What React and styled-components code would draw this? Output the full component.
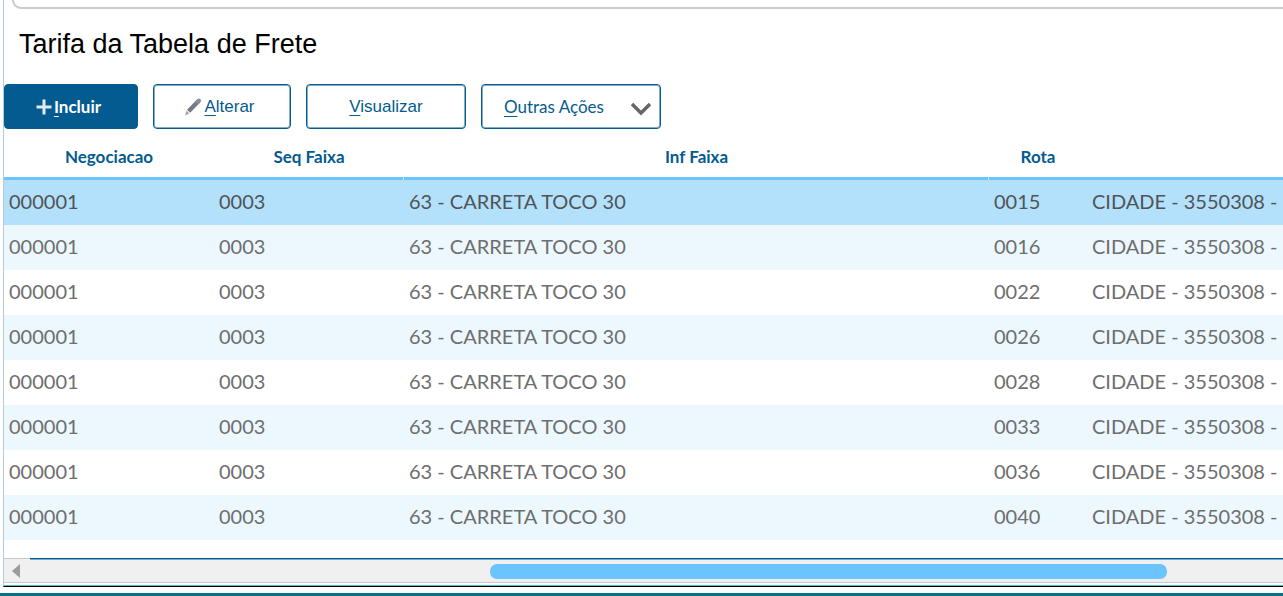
import { Fragment } from 'react';
import styled, { createGlobalStyle } from 'styled-components';

const COLUMNS = [
  { label: 'Negociacao', width: 210 },
  { label: 'Seq Faixa', width: 190, divider: true },
  { label: 'Inf Faixa', width: 585, divider: true },
  { label: 'Rota', width: 98 },
  { label: '', width: 585 },
];

const ROTAS = ['0015', '0016', '0022', '0026', '0028', '0033', '0036', '0040'];

const rows = ROTAS.map((rota) => [
  '000001',
  '0003',
  '63 - CARRETA TOCO 30',
  rota,
  'CIDADE - 3550308 -',
]);

const App = () => {
  return (
    <Fragment>
      <GlobalStyle />
      <Page>
        <Panel>
          <PreviousCard />
          <Title>Tarifa da Tabela de Frete</Title>
          <Toolbar>
            <IconButton $primary $width={134}>
              <PlusIcon />
              <span>
                <u>I</u>ncluir
              </span>
            </IconButton>
            <IconButton $arial $width={138}>
              <PencilIcon />
              <span>
                <u>A</u>lterar
              </span>
            </IconButton>
            <Button $arial $width={160}>
              <span>
                <u>V</u>isualizar
              </span>
            </Button>
            <MenuButton $width={180}>
              <span>
                <u>O</u>utras Ações
              </span>
              <ChevronIcon />
            </MenuButton>
          </Toolbar>
          <TableArea>
            <Table>
              <colgroup>
                {COLUMNS.map((column, i) => (
                  <Col key={i} $width={column.width} />
                ))}
              </colgroup>
              <thead>
                <tr>
                  {COLUMNS.map((column, i) => (
                    <HeaderCell key={i} $divider={column.divider}>
                      {column.label}
                    </HeaderCell>
                  ))}
                </tr>
              </thead>
              <tbody>
                {rows.map((row, i) => (
                  <Row key={row[3]} $selected={i === 0}>
                    {row.map((cell, j) => (
                      <Cell key={j}>{cell}</Cell>
                    ))}
                  </Row>
                ))}
              </tbody>
            </Table>
          </TableArea>
          <Scroll>
            <ScrollButton aria-label="Rolar para a esquerda">
              <ArrowIcon />
            </ScrollButton>
            <Track>
              <Thumb />
            </Track>
          </Scroll>
        </Panel>
        <Footer />
      </Page>
    </Fragment>
  );
};

export default App;

const PlusIcon = () => (
  <svg width="16" height="16" viewBox="0 0 16 16" aria-hidden="true">
    <path d="M8 0.5v15M0.5 8h15" stroke="#dfeaf2" strokeWidth="3" />
  </svg>
);

const PencilIcon = () => (
  <svg width="18" height="18" viewBox="0 0 18 18" aria-hidden="true">
    <path d="M4.6 13.2L14.6 3" stroke="#757a85" strokeWidth="4.4" />
    <path d="M14 3.6l0.8-0.8" stroke="#8a8e97" strokeWidth="4.4" strokeLinecap="round" />
    <path d="M2.4 12.6l3 3L1 17.6z" fill="#a4a8ae" />
  </svg>
);

const ChevronIcon = () => (
  <svg width="22" height="18" viewBox="0 0 22 18" aria-hidden="true">
    <path d="M2 6l9 9 9-9" fill="none" stroke="#666" strokeWidth="3.4" />
  </svg>
);

const ArrowIcon = () => (
  <svg width="8" height="14" viewBox="0 0 8 14" aria-hidden="true">
    <path d="M8 0v14L0 7z" fill="#9c9c9c" />
  </svg>
);

const GlobalStyle = createGlobalStyle`
  * {
    box-sizing: border-box;
  }

  body {
    margin: 0;
    background-color: white;
    font-family: Lato, 'Open Sans', sans-serif;
  }
`;

const Page = styled.main`
  display: flex;
  flex-direction: column;
`;

const Panel = styled.section`
  margin-left: 3px;
  border-left: 1px solid #b4cbdc;
  border-bottom: 1px solid black;
  overflow: hidden;
`;

const PreviousCard = styled.div`
  height: 9px;
  margin: 0 -16px 0 8px;
  border: 2px solid #c8cccc;
  border-top: none;
  border-radius: 0 0 0 12px;
`;

const Title = styled.h1`
  margin: 0;
  padding: 19px 15px 24px;
  font: 400 27px/32px 'Liberation Sans', Arial, sans-serif;
  color: black;
`;

const Toolbar = styled.div`
  display: flex;
  gap: 15px;
`;

const Button = styled.button`
  display: flex;
  align-items: center;
  justify-content: center;
  gap: 2px;
  width: ${(props) => props.$width}px;
  height: 45px;
  padding: 0;
  border: 1px solid #045b8f;
  border-radius: 4px;
  box-shadow: inset 0 0 0 1px ${(props) => (props.$primary ? '#045b8f' : '#82adc7')};
  background-color: ${(props) => (props.$primary ? '#045b8f' : 'white')};
  color: ${(props) => (props.$primary ? 'white' : '#045b8f')};
  font-family: ${(props) => (props.$arial ? "'Liberation Sans', Arial" : "Lato, 'Open Sans'")}, sans-serif;
  font-size: 17px;
  font-weight: ${(props) => (props.$primary ? 700 : 400)};
  cursor: pointer;

  u {
    text-underline-offset: 3px;
    text-decoration-thickness: 1px;
  }
`;

const IconButton = styled(Button)`
  padding-right: 5px;
`;

const MenuButton = styled(Button)`
  justify-content: space-between;
  padding: 0 8px 0 22px;
`;

const TableArea = styled.div`
  overflow: hidden;
  padding-bottom: 18px;
`;

const Table = styled.table`
  table-layout: fixed;
  width: 1668px;
  border-collapse: separate;
  border-spacing: 0;
`;

const Col = styled.col`
  width: ${(props) => props.$width}px;
`;

const HeaderCell = styled.th`
  position: relative;
  height: 51px;
  padding: 6px 0 0;
  border-bottom: 3px solid #6bc4fd;
  color: #045b8f;
  font-size: 17px;
  font-weight: 700;

  &::after {
    content: '';
    display: ${(props) => (props.$divider ? 'block' : 'none')};
    position: absolute;
    right: 0;
    bottom: -3px;
    width: 1px;
    height: 3px;
    background-color: #c3e7fd;
  }
`;

const Row = styled.tr`
  background-color: ${(props) => (props.$selected ? '#b3e1fc' : 'white')};
  color: ${(props) => (props.$selected ? '#505457' : '#6e6e6e')};

  &:nth-child(even) {
    background-color: #ecf8fe;
  }
`;

const Cell = styled.td`
  height: 45px;
  padding: 0 5px 3px;
  font-size: 20px;
  white-space: nowrap;
`;

const Scroll = styled.div`
  display: flex;
  height: 28px;
  padding-bottom: 2px;
  border-bottom: 1px solid #4fc0c8;
`;

const ScrollButton = styled.button`
  display: flex;
  align-items: center;
  width: 26px;
  padding: 0 8px;
  border: solid #c8c8c8;
  border-width: 1px 0;
  background-color: #f0f0f0;
`;

const Track = styled.div`
  flex: 1;
  border-top: 1px solid #045b8f;
  border-bottom: 1px solid #c8c8c8;
  box-shadow: inset 0 1px #7faac6;
  background-color: #f0f0f0;
  padding-top: 5px;
`;

const Thumb = styled.div`
  width: 54%;
  height: 15px;
  margin-left: 460px;
  border-radius: 7px;
  background-color: #6bc4fd;
`;

const Footer = styled.footer`
  height: 3px;
  margin-top: 6px;
  background-color: #0b7089;
`;
